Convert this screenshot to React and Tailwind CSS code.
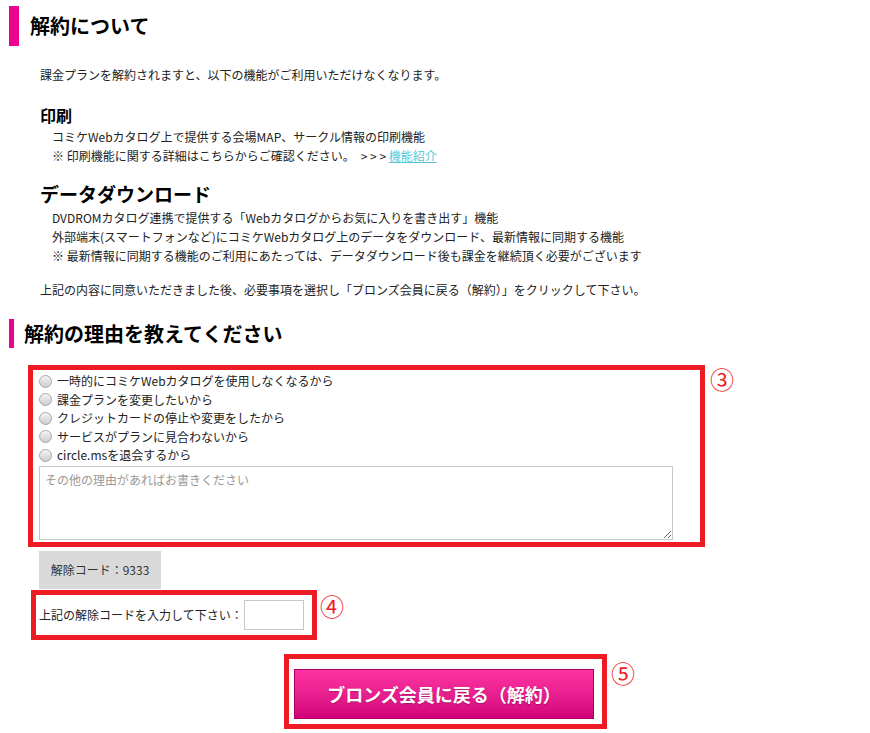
import React, { useState } from 'react';

const reasons = [
    '一時的にコミケWebカタログを使用しなくなるから',
    '課金プランを変更したいから',
    'クレジットカードの停止や変更をしたから',
    'サービスがプランに見合わないから',
    'circle.msを退会するから',
];

const Mark = ({ children, className = '' }) => (
    <span className={`text-[24px] leading-none text-[#ed1c24] ${className}`}>{children}</span>
);

const App = () => {
    const [reason, setReason] = useState(null);
    const [note, setNote] = useState('');
    const [code, setCode] = useState('');

    return (
        <div
            className="min-h-[733px] bg-white pt-[6px] pl-[9px] text-[12px] text-[#222]"
            style={{ fontFamily: '"Noto Sans CJK JP", "Noto Sans", sans-serif' }}
        >
            {/* 解約について */}
            <h2 className="flex h-[40px] items-center border-l-[10px] border-[#ec008c] pl-[11px] text-[20px] font-bold leading-none text-black">
                解約について
            </h2>

            <div className="ml-[31px]">
                <p className="mt-[20px] leading-[18px]">
                    課金プランを解約されますと、以下の機能がご利用いただけなくなります。
                </p>

                <h3 className="mt-[19px] text-[16px] font-bold leading-[24px] text-black">印刷</h3>
                <div className="pl-[12px] leading-[19px]">
                    <p>コミケWebカタログ上で提供する会場MAP、サークル情報の印刷機能</p>
                    <p>
                        ※ 印刷機能に関する詳細はこちらからご確認ください。　&gt; &gt; &gt;{' '}
                        <a href="#" className="text-[#5bc8d8] underline">機能紹介</a>
                    </p>
                </div>

                <h3 className="mt-[16px] text-[19px] font-bold leading-[26px] text-black">データダウンロード</h3>
                <div className="mt-[1px] pl-[12px] leading-[19px]">
                    <p>DVDROMカタログ連携で提供する「Webカタログからお気に入りを書き出す」機能</p>
                    <p>外部端末(スマートフォンなど)にコミケWebカタログ上のデータをダウンロード、最新情報に同期する機能</p>
                    <p>※ 最新情報に同期する機能のご利用にあたっては、データダウンロード後も課金を継続頂く必要がございます</p>
                </div>

                <p className="mt-[16px] leading-[18px]">
                    上記の内容に同意いただきました後、必要事項を選択し「ブロンズ会員に戻る（解約）」をクリックして下さい。
                </p>
            </div>

            {/* 解約の理由 */}
            <h2 className="mt-[20px] flex h-[29px] items-center border-l-[5px] border-[#ec008c] pl-[10px] text-[20px] font-bold leading-none text-black">
                解約の理由を教えてください
            </h2>

            <div className="mt-[17px] ml-[19px] flex items-start gap-[5px]">
                <div className="h-[182px] w-[677px] border-[5px] border-[#ed1c24] pt-[2px] pl-[6px]">
                    {reasons.map((r, i) => (
                        <label
                            key={r}
                            className="flex h-[18.5px] cursor-pointer items-center gap-[5px]"
                            onClick={() => setReason(i)}
                        >
                            <span className="flex h-[13px] w-[13px] items-center justify-center rounded-full border border-[#a6a6a6] bg-linear-to-b from-[#f4f4f4] to-[#cdcdcd]">
                                {reason === i && <span className="h-[5px] w-[5px] rounded-full bg-[#333]" />}
                            </span>
                            <span className="leading-none">{r}</span>
                        </label>
                    ))}
                    <textarea
                        value={note}
                        onChange={(e) => setNote(e.target.value)}
                        placeholder="その他の理由があればお書きください"
                        className="mt-[1px] block h-[74px] w-[634px] resize border border-[#c8c8c8] px-[5px] py-[4px] text-[12px] leading-[18px] outline-none placeholder:text-[#999]"
                    />
                </div>
                <Mark className="mt-[2px]">③</Mark>
            </div>

            <div className="mt-[4px] ml-[30px] flex h-[38px] w-[122px] items-center justify-center bg-[#d9d9d9] text-[#333]">
                解除コード：9333
            </div>

            <div className="mt-[1px] ml-[22px] flex items-start gap-[3px]">
                <div className="flex h-[50px] w-[286px] items-center border-[5px] border-[#ed1c24] pl-[3px]">
                    <span className="whitespace-nowrap">上記の解除コードを入力して下さい：</span>
                    <input
                        type="text"
                        value={code}
                        onChange={(e) => setCode(e.target.value)}
                        className="ml-[1px] h-[30px] w-[60px] border border-[#c8c8c8] px-[4px] outline-none"
                    />
                </div>
                <Mark className="mt-[4px]">④</Mark>
            </div>

            <div className="mt-[14px] ml-[275px] flex items-start gap-[4px]">
                <div className="h-[75px] w-[323px] border-[5px] border-[#ed1c24] pt-[10px] pl-[5px]">
                    <button
                        type="button"
                        className="h-[50px] w-[300px] border border-[#a8005f] bg-linear-to-b from-[#ff33a3] to-[#d2007a] text-[18px] font-bold text-white [text-shadow:0_1px_1px_rgba(0,0,0,0.25)]"
                    >
                        ブロンズ会員に戻る（解約）
                    </button>
                </div>
                <Mark className="mt-[7px]">⑤</Mark>
            </div>
        </div>
    );
};

export default App;
